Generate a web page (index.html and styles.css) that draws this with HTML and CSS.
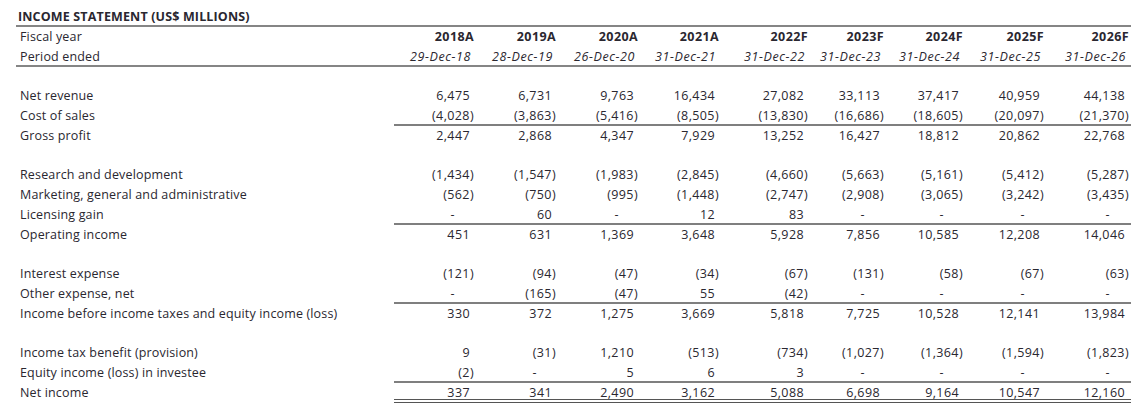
FILE: index.html
```html
<!DOCTYPE html>
<html>
<head>
<meta charset="utf-8">
<link rel="stylesheet" href="styles.css">
</head>
<body>
<div class="sheet">
  <div class="title">INCOME STATEMENT (US$ MILLIONS)</div>
  <div class="row">
    <div class="lbl">Fiscal year</div>
    <div class="yr">2018A</div><div class="yr">2019A</div><div class="yr">2020A</div><div class="yr">2021A</div><div class="yr">2022F</div><div class="yr">2023F</div><div class="yr">2024F</div><div class="yr">2025F</div><div class="yr">2026F</div>
  </div>
  <div class="row head-end">
    <div class="lbl">Period ended</div>
    <div class="dt">29-Dec-18</div><div class="dt">28-Dec-19</div><div class="dt">26-Dec-20</div><div class="dt">31-Dec-21</div><div class="dt">31-Dec-22</div><div class="dt">31-Dec-23</div><div class="dt">31-Dec-24</div><div class="dt">31-Dec-25</div><div class="dt">31-Dec-26</div>
  </div>
  <div class="row"></div>
  <div class="row">
    <div class="lbl">Net revenue</div>
    <div class="p">6,475</div><div class="p">6,731</div><div class="p">9,763</div><div class="p">16,434</div><div class="p">27,082</div><div class="p">33,113</div><div class="p">37,417</div><div class="p">40,959</div><div class="p">44,138</div>
  </div>
  <div class="row sub">
    <div class="lbl">Cost of sales</div>
    <div class="n">(4,028)</div><div class="n">(3,863)</div><div class="n">(5,416)</div><div class="n">(8,505)</div><div class="n">(13,830)</div><div class="n">(16,686)</div><div class="n">(18,605)</div><div class="n">(20,097)</div><div class="n">(21,370)</div>
  </div>
  <div class="row">
    <div class="lbl">Gross profit</div>
    <div class="p">2,447</div><div class="p">2,868</div><div class="p">4,347</div><div class="p">7,929</div><div class="p">13,252</div><div class="p">16,427</div><div class="p">18,812</div><div class="p">20,862</div><div class="p">22,768</div>
  </div>
  <div class="row"></div>
  <div class="row">
    <div class="lbl">Research and development</div>
    <div class="n">(1,434)</div><div class="n">(1,547)</div><div class="n">(1,983)</div><div class="n">(2,845)</div><div class="n">(4,660)</div><div class="n">(5,663)</div><div class="n">(5,161)</div><div class="n">(5,412)</div><div class="n">(5,287)</div>
  </div>
  <div class="row">
    <div class="lbl">Marketing, general and administrative</div>
    <div class="n">(562)</div><div class="n">(750)</div><div class="n">(995)</div><div class="n">(1,448)</div><div class="n">(2,747)</div><div class="n">(2,908)</div><div class="n">(3,065)</div><div class="n">(3,242)</div><div class="n">(3,435)</div>
  </div>
  <div class="row sub">
    <div class="lbl">Licensing gain</div>
    <div class="z">-</div><div class="p">60</div><div class="z">-</div><div class="p">12</div><div class="p">83</div><div class="z">-</div><div class="z">-</div><div class="z">-</div><div class="z">-</div>
  </div>
  <div class="row">
    <div class="lbl">Operating income</div>
    <div class="p">451</div><div class="p">631</div><div class="p">1,369</div><div class="p">3,648</div><div class="p">5,928</div><div class="p">7,856</div><div class="p">10,585</div><div class="p">12,208</div><div class="p">14,046</div>
  </div>
  <div class="row"></div>
  <div class="row">
    <div class="lbl">Interest expense</div>
    <div class="n">(121)</div><div class="n">(94)</div><div class="n">(47)</div><div class="n">(34)</div><div class="n">(67)</div><div class="n">(131)</div><div class="n">(58)</div><div class="n">(67)</div><div class="n">(63)</div>
  </div>
  <div class="row sub">
    <div class="lbl">Other expense, net</div>
    <div class="z">-</div><div class="n">(165)</div><div class="n">(47)</div><div class="p">55</div><div class="n">(42)</div><div class="z">-</div><div class="z">-</div><div class="z">-</div><div class="z">-</div>
  </div>
  <div class="row">
    <div class="lbl">Income before income taxes and equity income (loss)</div>
    <div class="p">330</div><div class="p">372</div><div class="p">1,275</div><div class="p">3,669</div><div class="p">5,818</div><div class="p">7,725</div><div class="p">10,528</div><div class="p">12,141</div><div class="p">13,984</div>
  </div>
  <div class="row"></div>
  <div class="row">
    <div class="lbl">Income tax benefit (provision)</div>
    <div class="p">9</div><div class="n">(31)</div><div class="p">1,210</div><div class="n">(513)</div><div class="n">(734)</div><div class="n">(1,027)</div><div class="n">(1,364)</div><div class="n">(1,594)</div><div class="n">(1,823)</div>
  </div>
  <div class="row sub">
    <div class="lbl">Equity income (loss) in investee</div>
    <div class="n">(2)</div><div class="z">-</div><div class="p">5</div><div class="p">6</div><div class="p">3</div><div class="z">-</div><div class="z">-</div><div class="z">-</div><div class="z">-</div>
  </div>
  <div class="row total">
    <div class="lbl">Net income</div>
    <div class="p">337</div><div class="p">341</div><div class="p">2,490</div><div class="p">3,162</div><div class="p">5,088</div><div class="p">6,698</div><div class="p">9,164</div><div class="p">10,547</div><div class="p">12,160</div>
  </div>
</div>
</body>
</html>
```

FILE: styles.css
```css
html, body {
  margin: 0;
  padding: 0;
  background: #ffffff;
}

.sheet {
  padding: 7px 0 0 16px;
  width: 1115px;
  font-family: "Open Sans", "Noto Sans", sans-serif;
  font-size: 12.5px;
  color: #2a2730;
}

.title {
  height: 20px;
  box-sizing: border-box;
  line-height: 19px;
  padding-left: 2px;
  font-weight: 700;
  font-size: 12.5px;
  letter-spacing: 0.15px;
  border-bottom: 2px solid #858585;
}

.row {
  display: grid;
  grid-template-columns: 378px 82px 82px 82px 81px 89px 76px 79px 81px 85px;
  height: 19.78px;
  box-sizing: border-box;
  line-height: 20px;
}

.row > div {
  text-align: right;
  white-space: nowrap;
  box-sizing: border-box;
  height: 19.78px;
  letter-spacing: 0.4px;
}

.row > .lbl {
  text-align: left;
  padding-left: 4px;
  letter-spacing: 0.15px;
}

.head-end {
  border-bottom: 2px solid #858585;
}

.yr {
  font-weight: 700;
  padding-right: 2px;
}

.dt {
  font-style: italic;
  padding-right: 5px;
}

.row > .dt {
  letter-spacing: 0.6px;
}

.p {
  padding-right: 6px;
}

.n {
  padding-right: 2px;
}

.z {
  padding-right: 21px;
}

.sub > div:not(.lbl) {
  border-bottom: 2px solid #7f7f7f;
}

.total > div:not(.lbl) {
  border-bottom: 4px double #555555;
}
```
